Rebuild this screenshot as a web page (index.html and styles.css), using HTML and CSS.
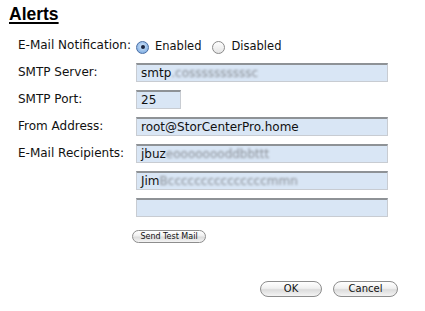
FILE: index.html
```html
<!DOCTYPE html>
<html lang="en">
<head>
    <meta charset="UTF-8">
    <title>Alerts</title>
    <link rel="stylesheet" href="styles.css">
</head>
<body>
    <h1 class="title">Alerts</h1>

    <div class="form">
        <label class="label">E-Mail Notification:</label>
        <div class="radios">
            <span class="radio radio-on"></span><span class="radio-text">Enabled</span>
            <span class="radio"></span><span class="radio-text">Disabled</span>
        </div>

        <label class="label">SMTP Server:</label>
        <div class="field">smtp<span class="blur">.cossssssssssc</span></div>

        <label class="label">SMTP Port:</label>
        <div class="field field-short">25</div>

        <label class="label">From Address:</label>
        <div class="field">root@StorCenterPro.home</div>

        <label class="label">E-Mail Recipients:</label>
        <div class="field">jbuz<span class="blur">eoooooooddbbttt</span></div>

        <span></span>
        <div class="field">Jim<span class="blur">Bcccccccccccccccmmn</span></div>

        <span></span>
        <div class="field"></div>

        <span></span>
        <div class="test-row"><button class="pill pill-small">Send Test Mail</button></div>
    </div>

    <div class="actions">
        <button class="pill pill-big">OK</button>
        <button class="pill pill-big">Cancel</button>
    </div>
</body>
</html>
```

FILE: styles.css
```css
body {
    margin: 0;
    padding: 0;
    width: 425px;
    height: 311px;
    background: #fff;
    font-family: "DejaVu Sans", Verdana, sans-serif;
    color: #111;
    overflow: hidden;
}

.title {
    margin: 4px 0 0 9px;
    font-family: "Liberation Sans", Arial, sans-serif;
    font-size: 17.5px;
    line-height: 20px;
    font-weight: bold;
    text-decoration: underline;
    text-decoration-thickness: 2px;
    text-underline-offset: 2px;
    color: #000;
}

.form {
    display: grid;
    grid-template-columns: 118px 252px;
    row-gap: 8px;
    margin: 12px 0 0 18px;
    font-size: 12px;
    align-items: center;
}

.label {
    line-height: 19px;
}

.radios {
    display: flex;
    align-items: center;
    height: 16px;
    font-size: 11.5px;
}

.radio {
    width: 11px;
    height: 11px;
    border-radius: 50%;
    border: 1px solid #8a8a8a;
    background: linear-gradient(#fff, #e4e4e4);
    margin: 3px 6px 0 0;
    position: relative;
}

.radio-on {
    border-color: #4a6fa5;
    background: radial-gradient(circle at 50% 40%, #d6e8fb, #6a9fdc);
}

.radio-on::after {
    content: "";
    position: absolute;
    left: 3.5px;
    top: 3.5px;
    width: 4px;
    height: 4px;
    border-radius: 50%;
    background: #1b2540;
}

.radio-text {
    margin-right: 11px;
}

.field {
    height: 19px;
    box-sizing: border-box;
    border: 1px solid #c8ccd2;
    border-top: 2px solid #8e9296;
    background: #d9e6f5;
    padding: 0 4px;
    line-height: 16px;
    white-space: nowrap;
    overflow: hidden;
}

.field-short {
    width: 45px;
}

.blur {
    color: #8a8f96;
    filter: blur(1px);
}

.test-row {
    padding-top: 3px;
}

.pill {
    font-family: "DejaVu Sans", Verdana, sans-serif;
    border: 1px solid #8d8d8d;
    border-radius: 10px;
    background: linear-gradient(#ffffff 0%, #f0f0f0 45%, #dcdcdc 55%, #f4f4f4 100%);
    color: #111;
    padding: 0;
    cursor: pointer;
}

.pill-small {
    margin-left: -4px;
    width: 74px;
    height: 13px;
    font-size: 8px;
    line-height: 11px;
}

.actions {
    display: flex;
    justify-content: flex-end;
    gap: 11px;
    margin: 38px 27px 0 0;
}

.pill-big {
    width: 62px;
    height: 16px;
    font-size: 10px;
    line-height: 14px;
}

.pill-big:last-child {
    width: 65px;
}
```
